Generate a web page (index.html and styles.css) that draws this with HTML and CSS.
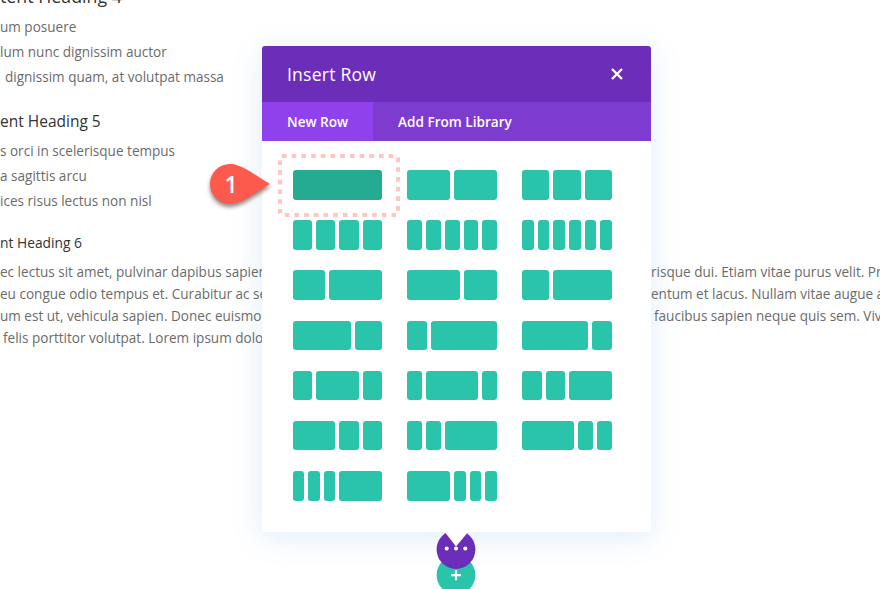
FILE: index.html
```html
<!DOCTYPE html>
<html lang="en">
<head>
<meta charset="utf-8">
<title>Insert Row</title>
<link rel="stylesheet" href="styles.css">
</head>
<body>
<main class="content">
  <h4 class="h4">tent Heading 4</h4>
  <ul class="list">
    <li>um posuere</li>
    <li>lum nunc dignissim auctor</li>
    <li class="in5">dignissim quam, at volutpat massa</li>
  </ul>
  <h5 class="h5">ent Heading 5</h5>
  <ul class="list list-b">
    <li>s orci in scelerisque tempus</li>
    <li>a sagittis arcu</li>
    <li>ices risus lectus non nisl</li>
  </ul>
  <h6 class="h6">nt Heading 6</h6>
  <div class="para">
    <div class="line"><span class="l">ec lectus sit amet, pulvinar dapibus sapien</span><span class="r">risque dui. Etiam vitae purus velit. Praesent</span></div>
    <div class="line"><span class="l">eu congue odio tempus et. Curabitur ac sem</span><span class="r">entum et lacus. Nullam vitae augue at</span></div>
    <div class="line"><span class="l">um est ut, vehicula sapien. Donec euismod</span><span class="r r-in">faucibus sapien neque quis sem. Vivamus</span></div>
    <div class="line"><span class="l in3">felis porttitor volutpat. Lorem ipsum dolor</span></div>
  </div>
</main>

<section class="modal">
  <header class="modal-head">
    <h2 class="modal-title">Insert Row</h2>
    <svg class="close" width="12" height="12" viewBox="0 0 12 12"><path d="M1 1l10 10M11 1L1 11" stroke="#fff" stroke-width="2.4" fill="none"/></svg>
  </header>
  <nav class="tabs">
    <span class="tab tab-on">New Row</span>
    <span class="tab">Add From Library</span>
  </nav>
  <div class="grid">
    <div class="layout"><i class="b w1 sel"></i></div>
    <div class="layout"><i class="b w1"></i><i class="b w1"></i></div>
    <div class="layout"><i class="b w1"></i><i class="b w1"></i><i class="b w1"></i></div>

    <div class="layout"><i class="b w1"></i><i class="b w1"></i><i class="b w1"></i><i class="b w1"></i></div>
    <div class="layout"><i class="b w1"></i><i class="b w1"></i><i class="b w1"></i><i class="b w1"></i><i class="b w1"></i></div>
    <div class="layout"><i class="b w1"></i><i class="b w1"></i><i class="b w1"></i><i class="b w1"></i><i class="b w1"></i><i class="b w1"></i></div>

    <div class="layout"><i class="b w33"></i><i class="b w53"></i></div>
    <div class="layout"><i class="b w53"></i><i class="b w33"></i></div>
    <div class="layout"><i class="b w27"></i><i class="b w59"></i></div>

    <div class="layout"><i class="b w59"></i><i class="b w27"></i></div>
    <div class="layout"><i class="b w20"></i><i class="b w66"></i></div>
    <div class="layout"><i class="b w66"></i><i class="b w20"></i></div>

    <div class="layout"><i class="b w19"></i><i class="b w43"></i><i class="b w19"></i></div>
    <div class="layout"><i class="b w15"></i><i class="b w52"></i><i class="b w15"></i></div>
    <div class="layout"><i class="b w19"></i><i class="b w19"></i><i class="b w43"></i></div>

    <div class="layout"><i class="b w43"></i><i class="b w19"></i><i class="b w19"></i></div>
    <div class="layout"><i class="b w15"></i><i class="b w15"></i><i class="b w52"></i></div>
    <div class="layout"><i class="b w52"></i><i class="b w15"></i><i class="b w15"></i></div>

    <div class="layout"><i class="b w11"></i><i class="b w11"></i><i class="b w11"></i><i class="b w43"></i></div>
    <div class="layout"><i class="b w43"></i><i class="b w11"></i><i class="b w11"></i><i class="b w11"></i></div>
  </div>
</section>

<svg class="dash" width="122" height="63" viewBox="0 0 122 63"><rect x="2" y="2" width="118" height="59" rx="2" fill="none" stroke="#ffc6be" stroke-width="4" stroke-dasharray="4.6 5.1"/></svg>

<div class="badge">
  <svg class="drop" width="62" height="42" viewBox="0 0 62 42"><path d="M21 1C33 1 47 13 61 21C47 29 33 41 21 41A20 20 0 0 1 21 1Z" fill="#fb5a4c"/></svg>
  <span class="badge-num">1</span>
</div>

<svg class="fab" width="40" height="60" viewBox="0 0 40 60">
  <circle cx="20" cy="44" r="19.4" fill="#29c4a9"/>
  <path d="M15 44.2h10M20 39.2v10" stroke="#fff" stroke-width="2.2" fill="none"/>
  <circle cx="20" cy="18.5" r="19.4" fill="#6c2eb9"/>
  <path d="M8 0L20 15.5L33 0Z" fill="#fff"/>
  <circle cx="10.7" cy="17.5" r="2" fill="#fff"/>
  <circle cx="20" cy="17.5" r="2" fill="#fff"/>
  <circle cx="29.3" cy="17.5" r="2" fill="#fff"/>
</svg>
</body>
</html>
```

FILE: styles.css
```css
* { box-sizing: border-box; }
html, body { margin: 0; height: 589px; overflow: hidden; background: #fff; }
body { position: relative; font-family: "Open Sans", "Liberation Sans", sans-serif; color: #6b6b6b; }

.content { margin-top: -17px; white-space: nowrap; font-size: 13.55px; }
.h4 { margin: 0; font-size: 17.8px; line-height: 26px; font-weight: 400; color: #333; }
.h5 { margin: 20px 0 0; font-size: 15.5px; line-height: 22px; font-weight: 400; color: #333; }
.h6 { margin: 19px 0 0; font-size: 13.8px; line-height: 20px; font-weight: 400; color: #333; }
.list { margin: 6px 0 0; padding: 0; list-style: none; }
.list li { height: 25px; line-height: 25px; }
.list-b { margin-top: 7px; }
.in5 { padding-left: 5px; }
.in3 { padding-left: 3px; }

.para { margin-top: 8px; }
.line { display: grid; grid-template-columns: 262px 1fr; height: 22px; line-height: 22px; }
.l, .r { display: block; overflow: hidden; }
.r { grid-column: 2; margin-left: 389px; }
.r-in { padding-left: 3px; }

.modal { position: absolute; left: 262px; top: 46px; width: 389px; height: 486px; background: #fff; border-radius: 3px; box-shadow: 0 5px 30px rgba(43, 135, 218, .15); }
.modal-head { display: flex; align-items: center; justify-content: space-between; height: 56px; padding: 0 28px 1px 25px; background: #6c2eb9; border-radius: 3px 3px 0 0; }
.modal-title { margin: 0; font-size: 17.6px; font-weight: 500; letter-spacing: .2px; color: #fff; }
.tabs { display: flex; height: 39px; background: #7e3bd0; }
.tab { display: flex; align-items: center; padding: 0 25px; font-size: 13.6px; font-weight: 600; color: #fff; white-space: nowrap; }
.tab-on { width: 111px; background: #8f42ec; }

.grid { display: grid; grid-template-columns: repeat(3, 89.5px); column-gap: 25.4px; row-gap: 20.7px; padding: 29px 0 0 30.5px; }
.layout { display: flex; gap: 4px; height: 29.5px; }
.b { display: block; flex: 1 1 0; min-width: 0; background: #29c4a9; border-radius: 3px; }
.sel { background: #26ab93; }
.w1 { flex-grow: 1; }
.w11 { flex-grow: 11.5; }
.w15 { flex-grow: 15; }
.w19 { flex-grow: 19.5; }
.w20 { flex-grow: 20; }
.w27 { flex-grow: 27; }
.w33 { flex-grow: 33; }
.w43 { flex-grow: 43; }
.w52 { flex-grow: 52; }
.w53 { flex-grow: 53; }
.w59 { flex-grow: 59; }
.w66 { flex-grow: 66; }

.dash { position: absolute; left: 278px; top: 154px; }
.badge { position: absolute; left: 209px; top: 163px; width: 62px; height: 42px; display: flex; align-items: center; justify-content: center; }
.drop { position: absolute; left: 0; top: 0; filter: drop-shadow(0 3px 2px rgba(60, 30, 20, .55)); }
.badge-num { position: relative; margin-right: 18px; font-size: 23px; font-weight: 600; line-height: 1; color: #fff; }
.fab { position: absolute; left: 436px; top: 531px; }
```
